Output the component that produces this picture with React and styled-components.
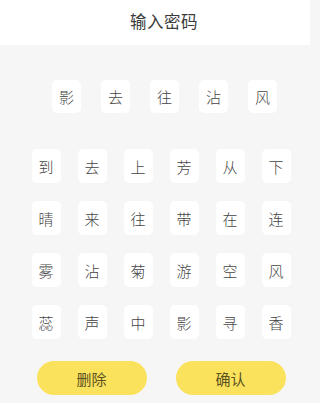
import React from 'react';
import styled, {createGlobalStyle} from "styled-components";

const GlobalStyle = createGlobalStyle`
  html, body {
    margin: 0;
    padding: 0;
    background: #f6f6f6;
  }
  * {
    box-sizing: border-box;
  }
`

const Page = styled.div`
  width: 310px;
  height: 403px;
  overflow: hidden;
  background: #f6f6f6;
  font-family: "Noto Sans CJK SC", "Liberation Sans", sans-serif;
`

const Header = styled.div`
  height: 45px;
  background: #fff;
  display: flex;
  justify-content: center;
  align-items: center;
  padding: 0 0 4px 18px;
  font-size: 16.5px;
  font-weight: 400;
  color: #3a3a3a;
  letter-spacing: 0.5px;
`

const Body = styled.div`
  padding: 35px 0 0 12px;
  display: flex;
  flex-direction: column;
  align-items: center;
`

const Row = styled.div`
  display: flex;
  gap: ${props => props.gap}px;
  padding-left: ${props => props.shift || 0}px;
`

const Grid = styled.div`
  margin-top: 36px;
  display: grid;
  grid-template-columns: repeat(6, 29px);
  column-gap: 17px;
  row-gap: 18px;
`

const Key = styled.div`
  width: ${props => props.w || 29}px;
  height: ${props => props.h || 34}px;
  background: #fff;
  border-radius: 5px;
  display: flex;
  align-items: center;
  justify-content: center;
  font-size: 15px;
  font-weight: 300;
  color: #444;
`

const Actions = styled.div`
  margin-top: 22px;
  display: flex;
  gap: 29px;
`

const ActionBtn = styled.div`
  width: 110px;
  height: 34px;
  border-radius: 17px;
  background: #fbe25c;
  display: flex;
  align-items: center;
  justify-content: center;
  font-size: 15px;
  color: #5b5222;
`

const chosen = ["影", "去", "往", "沾", "风"]
const keys = [
    "到", "去", "上", "芳", "从", "下",
    "晴", "来", "往", "带", "在", "连",
    "雾", "沾", "菊", "游", "空", "风",
    "蕊", "声", "中", "影", "寻", "香"
]

const App = () => {
    return (
        <Page>
            <GlobalStyle/>
            <Header>输入密码</Header>
            <Body>
                <Row gap={20} shift={7}>
                    {chosen.map((c, i) => (
                        <Key key={i} w={29} h={33}>{c}</Key>
                    ))}
                </Row>
                <Grid>
                    {keys.map((c, i) => (
                        <Key key={i}>{c}</Key>
                    ))}
                </Grid>
                <Actions>
                    <ActionBtn>删除</ActionBtn>
                    <ActionBtn>确认</ActionBtn>
                </Actions>
            </Body>
        </Page>
    )
}
export default App
